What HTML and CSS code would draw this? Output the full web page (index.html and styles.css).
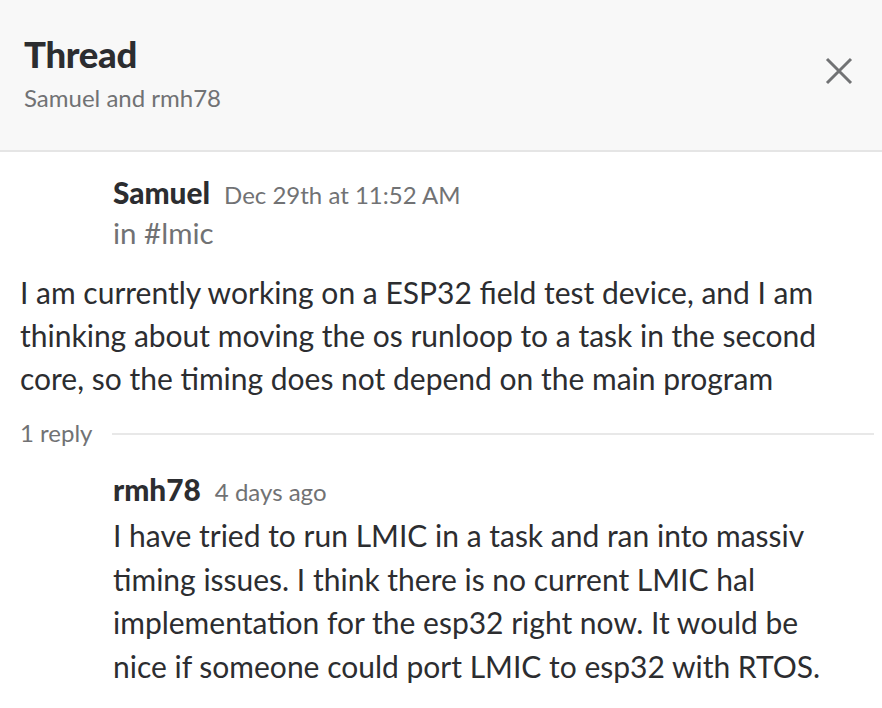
FILE: index.html
```html
<!DOCTYPE html>
<html>
<head>
<meta charset="utf-8">
<link rel="stylesheet" href="styles.css">
</head>
<body>
<div class="panel">
  <header class="head">
    <div class="head-text">
      <h1 class="title">Thread</h1>
      <div class="subtitle">Samuel and rmh78</div>
    </div>
    <button class="close" aria-label="Close">
      <svg width="28" height="28" viewBox="0 0 28 28"><path d="M2 2 L26 26 M26 2 L2 26" stroke="#717274" stroke-width="3" fill="none"/></svg>
    </button>
  </header>
  <main class="thread">
    <div class="parent">
      <div class="meta">
        <div><span class="name">Samuel</span><span class="ts">Dec 29th at 11:52 AM</span></div>
        <div class="channel">in #lmic</div>
      </div>
      <p class="body">I am currently working on a ESP32 ﬁeld test device, and I am thinking about moving the os runloop to a task in the second core, so the timing does not depend on the main program</p>
    </div>
    <div class="replies">
      <span class="count">1 reply</span>
      <span class="rule"></span>
    </div>
    <div class="reply">
      <div class="reply-meta"><span class="name">rmh78</span><span class="ts">4 days ago</span></div>
      <p class="body">I have tried to run LMIC in a task and ran into massiv timing issues. I think there is no current LMIC hal implementation for the esp32 right now. It would be nice if someone could port LMIC to esp32 with RTOS.</p>
    </div>
  </main>
</div>
</body>
</html>
```

FILE: styles.css
```css
html, body {
  margin: 0;
  padding: 0;
  background: #ffffff;
}
body {
  font-family: Lato, "Open Sans", sans-serif;
  color: #2c2d30;
  width: 882px;
  height: 708px;
  overflow: hidden;
  font-variant-ligatures: common-ligatures;
}
.head {
  background: #f8f8f8;
  height: 152px;
  box-sizing: border-box;
  border-bottom: 2px solid #e5e5e5;
  display: flex;
  align-items: flex-start;
  justify-content: space-between;
  padding: 32px 29px 0 24px;
}
.title {
  margin: 0;
  font-size: 36.5px;
  font-weight: 900;
  line-height: 44px;
  color: #2c2d30;
  letter-spacing: -0.3px;
}
.subtitle {
  margin-top: 6px;
  font-size: 24px;
  line-height: 32px;
  color: #717274;
}
.close {
  border: 0;
  background: none;
  padding: 0;
  margin-top: 25px;
  width: 28px;
  height: 28px;
  display: block;
}
.close svg { display: block; }
.thread {
  padding: 21px 8px 0 20px;
}
.meta {
  padding-left: 93px;
}
.meta-row {
  line-height: 39px;
}
.name {
  font-size: 29.8px;
  font-weight: 900;
  line-height: 39px;
  color: #2c2d30;
}
.ts {
  font-size: 24px;
  line-height: 39px;
  color: #717274;
  margin-left: 14px;
}
.channel {
  font-size: 29.5px;
  line-height: 38px;
  color: #717274;
}
.body {
  margin: 19px 34px 0 0;
  font-size: 30px;
  line-height: 43px;
  color: #2c2d30;
}
.replies {
  display: flex;
  align-items: center;
  gap: 20px;
  margin-top: 16px;
}
.count {
  font-size: 24px;
  line-height: 34px;
  color: #717274;
}
.rule {
  flex: 1;
  height: 2px;
  background: #e8e8e8;
  margin-top: 2px;
}
.reply {
  padding-left: 93px;
  margin-top: 20px;
}
.reply-meta {
  line-height: 41px;
  height: 43px;
}
.reply .body {
  margin-top: 1px;
  line-height: 43.5px;
}
```
